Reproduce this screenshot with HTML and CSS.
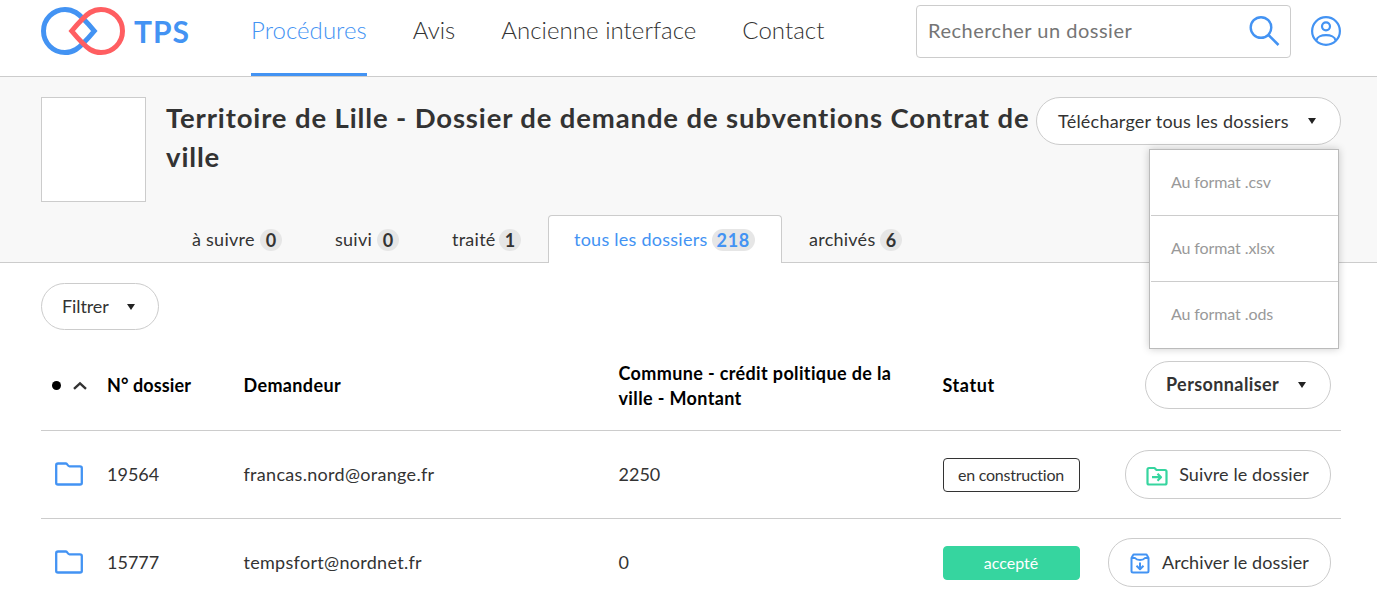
FILE: index.html
```html
<!DOCTYPE html>
<html lang="fr">
<head>
<meta charset="utf-8">
<title>TPS</title>
<link rel="stylesheet" href="styles.css">
</head>
<body>
<header class="header">
  <a class="logo">
    <svg class="logo-mark" width="84" height="48" viewBox="0 0 84 48" fill="none" stroke-width="5">
      <path stroke="#4393f3" d="M24 2.5A21.5 21.5 0 0 0 24 45.5C33 45.5 38 40.5 42 36.5C46 32.5 50 28 53.3 24C50 20 46 15.500 42 11.500C38 7.500 33 2.500 24 2.500Z"/>
      <path stroke="#ff5e61" d="M60 2.500A21.500 21.500 0 0 1 60 45.500C51 45.500 46 40.500 42 36.500C38 32.500 34 28 30.700 24C34 20 38 15.500 42 11.500C46 7.500 51 2.500 60 2.500Z"/>
    </svg>
    <span class="logo-text">TPS</span>
  </a>
  <nav class="nav">
    <a class="nav-link active">Procédures</a>
    <a class="nav-link">Avis</a>
    <a class="nav-link">Ancienne interface</a>
    <a class="nav-link">Contact</a>
  </nav>
  <div class="search">
    <span>Rechercher un dossier</span>
    <svg width="31" height="31" viewBox="0 0 31 31" fill="none" stroke="#4393f3" stroke-width="2.400"><circle cx="12" cy="11.500" r="10.300"/><path d="M19.500 19L29.500 29" stroke-width="2.600"/></svg>
  </div>
  <svg class="account" width="30" height="30" viewBox="0 0 30 30" fill="none" stroke="#4393f3" stroke-width="2.200"><circle cx="15" cy="15" r="13.900"/><circle cx="15" cy="10.300" r="4"/><path d="M5.500 24.300C6.500 17.500 23.500 17.500 24.500 24.300"/></svg>
</header>

<section class="procedure">
  <div class="procedure-top">
    <div class="procedure-logo"></div>
    <h1 class="title">Territoire de Lille - Dossier de demande de subventions Contrat de ville</h1>
    <div class="download">
      <button class="button button-download"><span>Télécharger tous les dossiers</span><i class="caret"></i></button>
      <ul class="menu">
        <li>Au format .csv</li>
        <li>Au format .xlsx</li>
        <li>Au format .ods</li>
      </ul>
    </div>
  </div>
  <div class="tabs">
    <a class="tab tab-follow"><span>à suivre</span><b class="count">0</b></a>
    <a class="tab tab-followed"><span>suivi</span><b class="count">0</b></a>
    <a class="tab tab-done"><span>traité</span><b class="count">1</b></a>
    <a class="tab tab-all active"><span>tous les dossiers</span><b class="count">218</b></a>
    <a class="tab tab-archived"><span>archivés</span><b class="count">6</b></a>
  </div>
</section>

<main class="content">
  <button class="button button-filter"><span>Filtrer</span><i class="caret"></i></button>
  <div class="table">
    <div class="row row-head">
      <div class="sort"><i class="dot"></i><svg width="14" height="9" viewBox="0 0 14 9" fill="none" stroke="#333" stroke-width="2.400"><path d="M1 7.800L7 2.300L13 7.800"/></svg></div>
      <div>N° dossier</div>
      <div class="applicant">Demandeur</div>
      <div class="amount">Commune - crédit politique de la ville - Montant</div>
      <div class="status">Statut</div>
      <div class="action"><button class="button button-custom"><span>Personnaliser</span><i class="caret"></i></button></div>
    </div>
    <div class="row">
      <div class="folder"><svg width="28" height="24" viewBox="0 0 28 24" fill="none" stroke="#4393f3" stroke-width="2.300" stroke-linejoin="round"><path d="M3 1.500H11C12.500 1.500 12.500 4.300 14.500 4.300H25Q26.800 4.300 26.800 6V21Q26.800 22.500 25 22.500H3Q1.200 22.500 1.200 21V3.200Q1.200 1.500 3 1.500Z"/></svg></div>
      <div class="cell">19564</div>
      <div class="cell email">francas.nord@orange.fr</div>
      <div class="cell">2250</div>
      <div><span class="label">en construction</span></div>
      <div class="action"><button class="button button-follow"><svg class="follow-icon" width="22" height="20" viewBox="0 0 22 20" fill="none" stroke="#36d59f" stroke-width="2.200" stroke-linejoin="round"><path d="M3 2H8.500L10.500 4H19Q20.500 4 20.500 5.500V17Q20.500 18.500 19 18.500H3Q1.500 18.500 1.500 17V3.500Q1.500 2 3 2Z"/><path d="M6 11.200H15M11.500 7.700L15 11.200L11.500 14.700"/></svg><span>Suivre le dossier</span></button></div>
    </div>
    <div class="row">
      <div class="folder"><svg width="28" height="24" viewBox="0 0 28 24" fill="none" stroke="#4393f3" stroke-width="2.300" stroke-linejoin="round"><path d="M3 1.500H11C12.500 1.500 12.500 4.300 14.500 4.300H25Q26.800 4.300 26.800 6V21Q26.800 22.500 25 22.500H3Q1.200 22.500 1.200 21V3.200Q1.200 1.500 3 1.500Z"/></svg></div>
      <div class="cell">15777</div>
      <div class="cell email">tempsfort@nordnet.fr</div>
      <div class="cell">0</div>
      <div><span class="label label-accepted">accepté</span></div>
      <div class="action"><button class="button button-archive"><svg class="archive-icon" width="20" height="21" viewBox="0 0 20 21" fill="none" stroke="#4393f3" stroke-width="2" stroke-linejoin="round"><path d="M1.500 5V18Q1.500 19.500 3 19.500H17Q18.500 19.500 18.500 18V5L17 2.200Q16.700 1.500 16 1.500H4Q3.300 1.500 3 2.200Z"/><path d="M1.500 5H5Q6.500 7 10 7T15 5H18.500"/><path d="M10 9.500V16M6.500 12.700L10 16.200L13.500 12.700"/></svg><span>Archiver le dossier</span></button></div>
    </div>
  </div>
</main>
</body>
</html>
```
FILE: styles.css
```css
* { box-sizing: border-box; }
body {
  margin: 0;
  height: 593px;
  overflow: hidden;
  background: #fff;
  color: #333;
  font: 400 18px/26px Lato, sans-serif;
}
.header {
  display: flex;
  height: 77px;
  padding: 0 36px 0 41px;
  border-bottom: 1px solid #ccc;
}
.logo { display: flex; width: 210px; padding-top: 7px; gap: 9px; }
.logo-text {
  color: #4393f3;
  font-size: 30px;
  font-weight: 700;
  line-height: 48px;
  letter-spacing: 1px;
}
.nav { display: flex; flex: 1; gap: 46px; }
.nav-link { height: 76px; font-size: 24px; font-weight: 300; line-height: 60px; letter-spacing: 0.04px; }
.nav-link.active { color: #4393f3; border-bottom: 3px solid #4393f3; }
.search {
  display: flex;
  align-items: center;
  justify-content: space-between;
  width: 375px;
  height: 53px;
  margin-top: 5px;
  padding: 0 10px 0 11px;
  border: 1px solid #ccc;
  border-radius: 4px;
  color: #757575;
  font-size: 20px;
  letter-spacing: 0.5px;
}
.search span { padding-bottom: 4px; }
.account { margin: 16px 0 0 20px; }
.procedure {
  height: 186px;
  padding: 20px 36px 0 41px;
  background: #f8f8f8;
  border-bottom: 1px solid #ccc;
}
.procedure-top { display: flex; height: 118px; }
.procedure-logo { width: 105px; height: 105px; background: #fff; border: 1px solid #ccc; }
.title {
  flex: 1;
  margin: 0 0 0 20px;
  padding-top: 1px;
  font-size: 27.5px;
  font-weight: 700;
  line-height: 39px;
  letter-spacing: 0.86px;
}
.download { position: relative; }
.button {
  display: flex;
  align-items: center;
  justify-content: space-between;
  height: 48px;
  padding: 0 21px 0 20px;
  border: 1px solid #ccc;
  border-radius: 24px;
  background: #fff;
  color: #333;
  font: inherit;
  letter-spacing: 0.1px;
  white-space: nowrap;
}
.button-filter span, .button-follow span, .button-archive span { padding-bottom: 2px; }
.caret { border: 4px solid transparent; border-top: 6px solid #222; border-bottom: 0; margin-right: 3px; }
.button-download { width: 305px; padding-left: 21px; letter-spacing: 0.22px; }
.button-filter { width: 118px; height: 47px; letter-spacing: -0.1px; }
.button-filter .caret { margin-right: 2px; }
.button-custom { width: 186px; margin-bottom: 2px; font-weight: 700; letter-spacing: 0.4px; }
.button-follow { width: 206px; height: 49px; }
.button-archive { width: 223px; height: 49px; padding-left: 21px; }
.follow-icon { margin-top: 2px; }
.archive-icon { margin-top: 1px; }
.menu {
  position: absolute;
  top: 52px;
  right: 2px;
  width: 190px;
  height: 200px;
  margin: 0;
  padding: 0 0 0 1px;
  border: 1px solid #bbb;
  background: #fff;
  box-shadow: 0 0 8px rgba(0, 0, 0, 0.2);
  color: #999;
  font-size: 16px;
  letter-spacing: -0.1px;
  list-style: none;
}
.menu li { height: 66px; padding-left: 20px; line-height: 64px; border-bottom: 1px solid #ccc; }
.menu li:last-child { border: 0; }
.tabs { display: flex; margin-left: 125px; }
.tab {
  display: flex;
  align-items: center;
  justify-content: space-between;
  height: 48px;
  padding: 0 26px 0 25px;
  border: 1px solid transparent;
  border-bottom: 0;
  letter-spacing: 0.25px;
}
.tab span { padding-bottom: 2px; }
.tab.active { color: #4393f3; background: #fff; border-color: #ccc; border-radius: 4px 4px 0 0; }
.tab-follow { width: 143px; }
.tab-followed { width: 117px; }
.tab-done { width: 122px; }
.tab-all { width: 234px; }
.tab-archived { width: 147px; padding-left: 26px; }
.count {
  min-width: 22px;
  padding: 0 5px;
  border-radius: 11px;
  background: #e6e6e6;
  line-height: 22px;
  text-align: center;
}
.tab-all .count { letter-spacing: 0.7px; }
.content { padding: 20px 36px 0 41px; }
.table { margin-top: 11px; }
.row {
  display: grid;
  grid-template-columns: 66px 136.5px 375px 324px 137px 1fr;
  align-items: center;
  height: 88px;
  border-bottom: 1px solid #ccc;
}
.row-head { height: 90px; color: #000; font-weight: 700; line-height: 25px; letter-spacing: 0.1px; }
.cell { padding-bottom: 2px; }
.email { letter-spacing: 0.3px; }
.applicant, .amount { letter-spacing: 0.36px; }
.status { letter-spacing: 0.6px; }
.amount { width: 290px; }
.sort { display: flex; align-items: center; gap: 12px; padding-left: 11px; }
.dot { width: 9px; height: 9px; border-radius: 50%; background: #000; }
.folder { display: flex; padding: 0 0 2px 14px; }
.action { display: flex; justify-content: flex-end; padding-right: 10px; }
.label {
  display: block;
  height: 34px;
  border: 1px solid #333;
  border-radius: 4px;
  font-size: 16px;
  line-height: 31px;
  letter-spacing: -0.25px;
  text-align: center;
}
.label-accepted { color: #fff; background: #36d59f; border-color: #36d59f; letter-spacing: 0; }
```
